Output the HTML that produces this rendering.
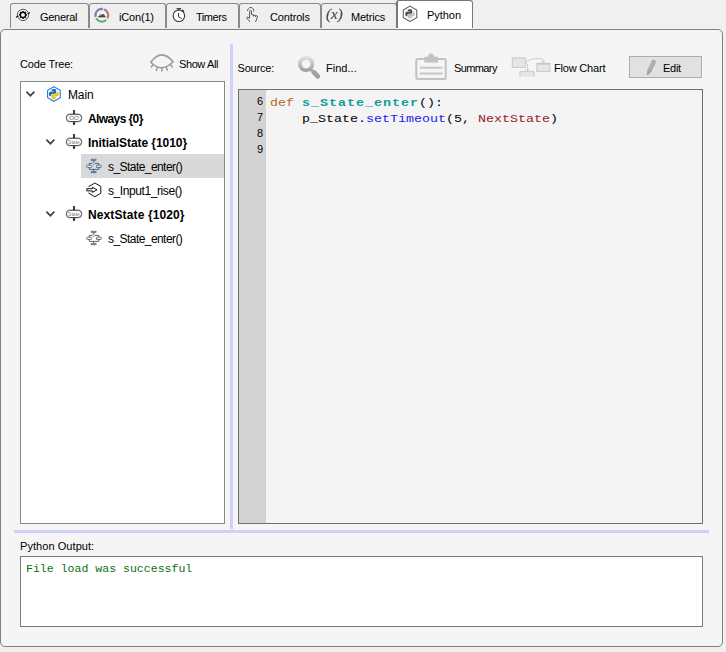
<!DOCTYPE html>
<html>
<head>
<meta charset="utf-8">
<title>Python</title>
<style>
html,body{margin:0;padding:0;}
body{width:726px;height:652px;background:#f0f0f0;position:relative;overflow:hidden;font-family:"Liberation Sans",sans-serif;font-size:11px;color:#000;}
.abs{position:absolute;}
.t{position:absolute;white-space:nowrap;line-height:14px;height:14px;}
/* tabs */
.tab{position:absolute;top:3px;height:25px;box-sizing:border-box;border:1px solid #8a8a8a;border-bottom:none;border-radius:3px 3px 0 0;background:#efefef;}
.tab::after{content:"";position:absolute;left:-1px;right:-1px;bottom:-1px;height:1px;background:inherit;}
.tab.sel::after{left:-2px;}
.tab.sel{top:0px;height:28px;background:#fff;border-color:#777;border-left-width:2px;}
#pane{position:absolute;left:0;top:29px;width:723px;height:618px;box-sizing:border-box;border:1px solid #7f7f7f;border-radius:5px;background:#f5f5f5;}
/* tree */
#tree{position:absolute;left:20px;top:81px;width:205px;height:443px;box-sizing:border-box;border:1px solid #828790;background:#fff;}
.row{position:absolute;white-space:nowrap;font-size:12px;line-height:24px;height:24px;}
.b{font-weight:bold;}
#vsplit{position:absolute;left:230px;top:44px;width:3px;height:485px;background:#d0d0ff;}
#hsplit{position:absolute;left:14px;top:530px;width:695px;height:3px;background:#d0d0ff;}
#editor{position:absolute;left:238px;top:89px;width:465px;height:435px;box-sizing:border-box;border:1px solid #6e6e6e;background:#f4f4f4;}
#gutter{position:absolute;left:0;top:0;width:27px;height:433px;background:#d3d3d3;}
.ln{position:absolute;left:0;width:24px;text-align:right;font-size:11px;line-height:16px;height:16px;}
.cl{position:absolute;left:31px;white-space:pre;font-family:"Liberation Mono",monospace;font-size:13.33px;line-height:16px;height:16px;transform:scaleY(0.84);transform-origin:0 12px;}
.kw{color:#b8681c;}
.fn{color:#129c9e;font-weight:bold;letter-spacing:1px;}
.me{color:#1c1cf0;}
.st{color:#9a1818;}
.ws{color:transparent;}
.ws i{display:inline-block;width:8px;height:16px;vertical-align:top;background:linear-gradient(#e0c4b2,#e0c4b2) no-repeat 4px 4.6px/1px 1.2px;}
#out{position:absolute;left:20px;top:556px;width:683px;height:71px;box-sizing:border-box;border:1px solid #7a7a7a;background:#fff;}
#outtxt{position:absolute;left:5px;top:5px;font-family:"Liberation Mono",monospace;font-size:11.55px;line-height:14px;color:#0f700f;white-space:pre;}
#btn{position:absolute;left:629px;top:56px;width:73px;height:22px;box-sizing:border-box;border:1px solid #adadad;background:#e1e1e1;}
</style>
</head>
<body>
<!-- tabs -->
<div class="tab" style="left:10px;width:79px;"></div>
<div class="tab" style="left:89px;width:77px;"></div>
<div class="tab" style="left:166px;width:73px;"></div>
<div class="tab" style="left:239px;width:82px;"></div>
<div class="tab" style="left:321px;width:76px;"></div>
<div id="pane"></div>
<div class="tab sel" style="left:396px;width:77px;"></div>

<div class="t" id="tx_general" style="letter-spacing:-0.28px;left:40px;top:10px;">General</div>
<div class="t" id="tx_icon" style="letter-spacing:-0.18px;left:119px;top:10px;">iCon(1)</div>
<div class="t" id="tx_timers" style="letter-spacing:-0.44px;left:196px;top:10px;">Timers</div>
<div class="t" id="tx_controls" style="letter-spacing:-0.15px;left:270px;top:10px;">Controls</div>
<div class="t" id="tx_metrics" style="letter-spacing:-0.21px;left:351px;top:10px;">Metrics</div>
<div class="t" id="tx_python" style="letter-spacing:-0.05px;left:427px;top:8px;">Python</div>

<div class="t" id="tx_codetree" style="letter-spacing:-0.14px;left:20px;top:57px;">Code Tree:</div>
<div class="t" id="tx_showall" style="letter-spacing:-0.40px;left:179px;top:57px;">Show All</div>
<div class="t" id="tx_source" style="letter-spacing:-0.20px;left:237.5px;top:61px;">Source:</div>
<div class="t" id="tx_find" style="letter-spacing:0.03px;left:326px;top:61px;">Find...</div>
<div class="t" id="tx_summary" style="letter-spacing:-0.61px;left:454px;top:61px;">Summary</div>
<div class="t" id="tx_flow" style="letter-spacing:-0.19px;left:554px;top:61px;">Flow Chart</div>
<div id="btn"></div>
<div class="t" id="tx_edit" style="letter-spacing:-0.26px;left:663px;top:61px;">Edit</div>

<div id="tree">
  <div class="abs" style="left:60px;top:72px;width:143px;height:24px;background:#d9d9d9;"></div>
</div>
<div class="row" id="r_main" style="letter-spacing:-0.13px;left:68px;top:83px;">Main</div>
<div class="row b" id="r_always" style="letter-spacing:-0.60px;left:88px;top:107px;">Always {0}</div>
<div class="row b" id="r_init" style="letter-spacing:-0.05px;left:88px;top:131px;">InitialState {1010}</div>
<div class="row" id="r_se1" style="letter-spacing:-0.56px;left:108px;top:155px;">s_State_enter()</div>
<div class="row" id="r_in1" style="letter-spacing:-0.41px;left:108px;top:179px;">s_Input1_rise()</div>
<div class="row b" id="r_next" style="letter-spacing:0.12px;left:88px;top:203px;">NextState {1020}</div>
<div class="row" id="r_se2" style="letter-spacing:-0.56px;left:108px;top:227px;">s_State_enter()</div>

<div id="vsplit"></div>
<div id="hsplit"></div>

<div id="editor">
  <div id="gutter"></div>
  <div class="ln" style="top:3px;">6</div>
  <div class="ln" style="top:19px;">7</div>
  <div class="ln" style="top:35px;">8</div>
  <div class="ln" style="top:51px;">9</div>
  <div class="cl" id="cl6" style="top:5px;"><span class="kw">def</span><span class="ws"><i></i></span><span class="fn">s_State_enter</span>():</div>
  <div class="cl" id="cl7" style="top:21px;"><span class="ws"><i></i><i></i><i></i><i></i></span>p_State.<span class="me">setTimeout</span>(5,<span class="ws"><i></i></span><span class="st">NextState</span>)</div>
</div>

<div class="t" id="tx_pyout" style="letter-spacing:0.06px;left:20px;top:539px;">Python Output:</div>
<div id="out"><div id="outtxt">File load was successful</div></div>

<svg class="abs" id="icons" style="left:0;top:0;pointer-events:none;will-change:transform;" width="726" height="652" viewBox="0 0 726 652">
<defs>
 <g id="chev"><path d="M-4,-2 L0,2 L4,-2" fill="none" stroke="#444" stroke-width="1.7"/></g>
 <g id="pill">
  <rect x="-7.8" y="-3.9" width="15.6" height="7.8" rx="3.6" fill="none" stroke="#bbb" stroke-width="1.8" opacity="0.45"/>
  <rect x="-7.5" y="-3.6" width="15" height="7.2" rx="3.3" fill="#fff" stroke="#333" stroke-width="0.9"/>
  <path d="M0,-7.8 L0,-4" stroke="#000" stroke-width="1.5"/>
  <path d="M0,4 L0,6.2" stroke="#000" stroke-width="1.3"/>
  <path d="M-1,5.6 L1,5.6 L0,7.2z" fill="#000" stroke="#000" stroke-width="0.5"/>
 </g>
 <g id="flowc">
  <rect x="-2.5" y="-6.9" width="5" height="1.6" fill="var(--f)" stroke="var(--s)" stroke-width="0.5"/>
  <rect x="-2.5" y="5.3" width="5" height="1.6" fill="var(--f)" stroke="var(--s)" stroke-width="0.5"/>
  <path d="M0,-5.2 L0,-3.8 M-1.8,-2.6 L-4.3,-2.6 L-4.3,-0.8 M1.8,-2.6 L5.2,-2.6 L5.2,-0.8 M-4.3,1.5 L-4.3,3.4 L5.2,3.4 L5.2,1.5 M0,3.4 L0,5.2" fill="none" stroke="var(--s)" stroke-width="0.9"/>
  <path d="M-2.3,-2.6 L0,-3.7 L2.3,-2.6 L0,-1.5z" fill="var(--l)" stroke="var(--s)" stroke-width="0.5"/>
  <rect x="-7.1" y="-0.8" width="5.2" height="2.3" rx="1.1" fill="var(--l)" stroke="var(--s)" stroke-width="0.8"/>
  <rect x="2.9" y="-0.8" width="4.6" height="2.3" rx="0.4" fill="var(--l)" stroke="var(--s)" stroke-width="0.8"/>
 </g>

 <g id="pyA"><path d="M4.9,0 C2.4,0 2.6,1.1 2.6,1.1 V2.2 H5 V2.6 H1.6 C1.6,2.6 0,2.4 0,5 C0,7.5 1.4,7.4 1.4,7.4 H2.2 V6.2 C2.2,6.2 2.2,4.8 3.6,4.8 H6 C6,4.8 7.3,4.8 7.3,3.5 V1.3 C7.3,1.3 7.5,0 4.9,0z"/></g>
 <g id="pyB"><path d="M5.1,10 C7.6,10 7.4,8.9 7.4,8.9 V7.8 H5 V7.4 H8.4 C8.4,7.4 10,7.6 10,5 C10,2.5 8.6,2.6 8.6,2.6 H7.8 V3.8 C7.8,3.8 7.8,5.2 6.4,5.2 H4 C4,5.2 2.7,5.2 2.7,6.5 V8.7 C2.7,8.7 2.5,10 5.1,10z"/></g>
</defs>

<!-- General gear -->
<g transform="translate(23,14.9)">
 <circle r="6.3" fill="none" stroke="#fff" stroke-width="1.6" opacity="0.7"/>
 <circle r="5.7" fill="none" stroke="#222" stroke-width="0.75"/>
 <circle r="2.7" fill="#fff" stroke="#000" stroke-width="1.5"/>
 <g stroke="#000" stroke-width="1.3">
 <line x1="3.00" y1="0.00" x2="4.00" y2="0.00"/><line x1="2.12" y1="2.12" x2="2.83" y2="2.83"/><line x1="0.00" y1="3.00" x2="0.00" y2="4.00"/><line x1="-2.12" y1="2.12" x2="-2.83" y2="2.83"/><line x1="-3.00" y1="0.00" x2="-4.00" y2="0.00"/><line x1="-2.12" y1="-2.12" x2="-2.83" y2="-2.83"/><line x1="0" y1="-3.00" x2="0" y2="-4.00"/><line x1="2.12" y1="-2.12" x2="2.83" y2="-2.83"/>
 </g>
 <path d="M4.6,-1.4 L6.7,-2.5 L6.2,-1.2z" fill="#000" stroke="#000" stroke-width="0.5"/>
 <path d="M-4.6,1.4 L-6.7,2.5 L-6.2,1.2z" fill="#000" stroke="#000" stroke-width="0.5"/>
</g>

<!-- iCon -->
<circle cx="101.8" cy="15.3" r="7.6" fill="#fafafa" opacity="0.6"/>
<g fill="none" stroke-width="2.2">
 <path d="M95.62,16.96 A6.40,6.40 0 0 1 101.58,8.90" stroke="#7e7cba"/>
 <path d="M101.2,7.2 L103.9,9.2 L101.2,10.8z" fill="#7e7cba" stroke="none"/>
 <path d="M104.20,9.37 A6.40,6.40 0 0 1 107.34,18.50" stroke="#b27c7c"/>
 <path d="M106.25,19.90 A6.40,6.40 0 0 1 96.15,18.30" stroke="#6eae72"/>
</g>
<path d="M98.3,16.7 L105.4,16.7" stroke="#333" stroke-width="1.3"/>
<path d="M99.3,16.2 L100,13.3 L100.9,15.4 L102.6,13.7 L104.4,14.4 L105,16.2z" fill="#555"/>

<!-- Timers -->
<g>
 <circle cx="178.9" cy="15.8" r="5.75" fill="#fff" stroke="#3a3236" stroke-width="1.1"/>
 <rect x="176.6" y="8.1" width="4.6" height="1.1" fill="#3a3236"/>
 <rect x="178.2" y="9" width="1.4" height="1.4" fill="#3a3236"/>
 <path d="M182.2,10.2 L183.7,11.7" stroke="#3a3236" stroke-width="1.7"/>
 <path d="M178.5,13 L178.5,16.8 L181.7,18.5" fill="none" stroke="#3a3236" stroke-width="1"/>
</g>

<!-- Controls hand -->
<g fill="none" stroke="#fff" stroke-width="2.6" opacity="0.55" stroke-linecap="round">
 <path d="M247.65,11.14 A3.10,3.10 0 1 1 253.61,11.66"/>
 <path d="M249.6,18.3 L249.6,11.2 A0.95,0.95 0 0 1 251.5,11.2 L251.5,14.6 L253.4,15 L255.4,15.4 L257.3,16 L257.3,17.5 L255.5,22"/>
 <path d="M249.6,18.3 L247.6,17 L246.4,17.6 L250,22"/>
</g>
<g fill="none" stroke="#505050" stroke-width="1">
 <path d="M247.65,11.14 A3.10,3.10 0 1 1 253.61,11.66"/>
 <path d="M249.6,18.3 L249.6,11.2 A0.95,0.95 0 0 1 251.5,11.2 L251.5,14.6 L253.4,15 L255.4,15.4 L257.3,16 L257.3,17.5 L255.5,22"/>
 <path d="M249.6,18.3 L247.6,17 L246.4,17.6 L250,22"/>
 <path d="M253.5,15 V16.4 M255.5,15.5 V16.9"/>
</g>

<!-- Metrics (x) -->
<text x="326" y="18.9" font-family="Liberation Serif, serif" font-style="italic" font-size="15" fill="#484848" stroke="#484848" stroke-width="0.2">(x)</text>

<!-- Python tab icon -->
<g>
 <polygon points="410.00,6.10 416.75,9.95 416.75,17.65 410.00,21.50 403.25,17.65 403.25,9.95" fill="#fdfdfd" stroke="#5a5a5a" stroke-width="1.05"/>
 <g transform="translate(405.3,9.2) scale(0.94)"><use href="#pyA" fill="#4a4a4a"/><use href="#pyB" fill="#c2c2c2"/></g>
</g>

<!-- Eye -->
<g fill="none" stroke="#9c9c9c" stroke-width="1.6" stroke-linecap="round">
 <path d="M150.8,62.2 Q161.7,47.8 173,61.8"/>
 <path d="M150.8,62.2 Q161.7,73.4 173,61.8"/>
 <path d="M152.8,65 L151.3,67 M157.2,67.4 L156.3,70.2 M161.8,68.2 L161.8,71 M166.4,67.4 L167.3,70.2 M170.8,65 L172.3,67" stroke-width="1.5"/>
</g>

<!-- Magnifier -->
<g>
 <linearGradient id="mgr" x1="0" y1="0" x2="0" y2="1"><stop offset="0" stop-color="#e2e2e2"/><stop offset="1" stop-color="#a2a2a2"/></linearGradient>
 <path d="M310.6,69.2 L313.6,72.2" stroke="#a8a8a8" stroke-width="3"/>
 <path d="M313.8,72.3 L317.8,76.3" stroke="#a2a2a2" stroke-width="4.8" stroke-linecap="round"/>
 <circle cx="306.1" cy="63.9" r="6.45" fill="none" stroke="url(#mgr)" stroke-width="3.5"/>
 <circle cx="306.1" cy="63.9" r="4.8" fill="none" stroke="#a8a8a8" stroke-width="0.5" opacity="0.8"/>
</g>

<!-- Clipboard -->
<g>
 <rect x="416.3" y="59.1" width="29.4" height="20" rx="1.5" fill="none" stroke="#c3c3c3" stroke-width="2"/>
 <rect x="424.3" y="56.8" width="13.7" height="5.8" fill="#c3c3c3"/>
 <path d="M427.6,57 L429.6,53.4 L432.6,53.4 L434.6,57z" fill="#c3c3c3"/>
 <rect x="420" y="66.7" width="22.5" height="2" fill="#c6c6c6"/>
 <rect x="420" y="72.5" width="22.5" height="2" fill="#c6c6c6"/>
</g>

<!-- Flow chart icon -->
<g>
 <rect x="512.3" y="57.9" width="13" height="9.4" fill="#e6e6e6" stroke="#c6c6c6" stroke-width="1"/>
 <rect x="536.9" y="63.4" width="13" height="8" fill="#e6e6e6" stroke="#c6c6c6" stroke-width="1"/>
 <rect x="536.9" y="63.4" width="13" height="1.2" fill="#c6c6c6"/>
 <path d="M519.9,76.8 V71.6 H534 V76.8" fill="#e6e6e6" stroke="#cacaca" stroke-width="1"/>
 <path d="M526,61.5 Q533,57.5 541,58.6 Q543.5,59.2 543.5,62" fill="none" stroke="#c6c6c6" stroke-width="0.9"/>
 <path d="M541.8,61 L543.5,63 L545.2,61" fill="none" stroke="#c6c6c6" stroke-width="0.9"/>
 <path d="M526,63 Q528,63.5 527.6,66 L527.2,70.5" fill="none" stroke="#c6c6c6" stroke-width="0.9"/>
 <path d="M525.6,69 L527.2,71 L528.8,69" fill="none" stroke="#c6c6c6" stroke-width="0.9"/>
</g>

<!-- Pencil -->
<g transform="translate(651,67.45) rotate(25.8)">
 <rect x="-2.25" y="-8" width="4.5" height="12.2" rx="0.8" fill="#bcbcbc"/>
 <rect x="-2.25" y="-8" width="4.5" height="2.4" rx="1" fill="#b0b0b0"/>
 <rect x="-1.5" y="-5.6" width="0.7" height="9.6" fill="#a4a4a4"/>
 <rect x="-0.1" y="-5.6" width="0.7" height="9.6" fill="#a4a4a4"/>
 <rect x="1.2" y="-5.6" width="0.7" height="9.6" fill="#a4a4a4"/>
 <rect x="-2.25" y="3.4" width="4.5" height="1" fill="#9a9a9a"/>
 <path d="M-1.9,4.4 L-0.6,8 L0.6,8 L1.9,4.4z" fill="#a8a8a8"/>
 <path d="M-0.8,6.6 L-0.3,8.1 L0.3,8.1 L0.8,6.6z" fill="#8a8a8a"/>
</g>

<!-- tree chevrons -->
<use href="#chev" x="30.4" y="93.7"/>
<use href="#chev" x="50.4" y="141.7"/>
<use href="#chev" x="50.4" y="213.7"/>

<!-- tree python icon -->
<g>
 <polygon points="53.95,86.70 60.30,90.35 60.30,97.65 53.95,101.30 47.60,97.65 47.60,90.35" fill="#fff" stroke="#2a7bf5" stroke-width="1.15"/>
 <g transform="translate(49,89.1) scale(0.98)"><use href="#pyA" fill="#0d6fb8"/><use href="#pyB" fill="#fcbc14"/></g>
</g>

<!-- Always / State pills -->
<g transform="translate(74,117.9)"><use href="#pill"/>
 <ellipse cx="-2.4" cy="0" rx="2.1" ry="1.7" fill="none" stroke="#777" stroke-width="0.7"/>
 <ellipse cx="2.4" cy="0" rx="2.1" ry="1.7" fill="none" stroke="#777" stroke-width="0.7"/>
</g>
<g transform="translate(74,141.9)"><use href="#pill"/>
 <text x="0" y="1.8" text-anchor="middle" font-family="Liberation Sans, sans-serif" font-size="5.1" fill="#7c7c7c">State</text>
</g>
<g transform="translate(74,213.9)"><use href="#pill"/>
 <text x="0" y="1.8" text-anchor="middle" font-family="Liberation Sans, sans-serif" font-size="5.1" fill="#7c7c7c">State</text>
</g>

<!-- s_State_enter icons -->
<g transform="translate(93.6,166)" style="--f:#6d99c9;--s:#3d5b7c;--l:#e2f0fd"><use href="#flowc"/></g>
<g transform="translate(93.6,238)" style="--f:#9c9c9c;--s:#505050;--l:#fafafa"><use href="#flowc"/></g>

<!-- s_Input1_rise icon -->
<g fill="none" stroke="#111" stroke-width="1">
 <path d="M88.9,186.9 L88.9,186.42 L94.85,183 L100.8,186.42 L100.8,193.28 L94.85,196.7 L88.9,193.28 L88.9,192.6"/>
 <path d="M86.8,188.7 H92.4 V187.2 L97,189.8 L92.4,192.4 V190.9 H86.8z" fill="#fff"/>
</g>
</svg>
</body>
</html>
